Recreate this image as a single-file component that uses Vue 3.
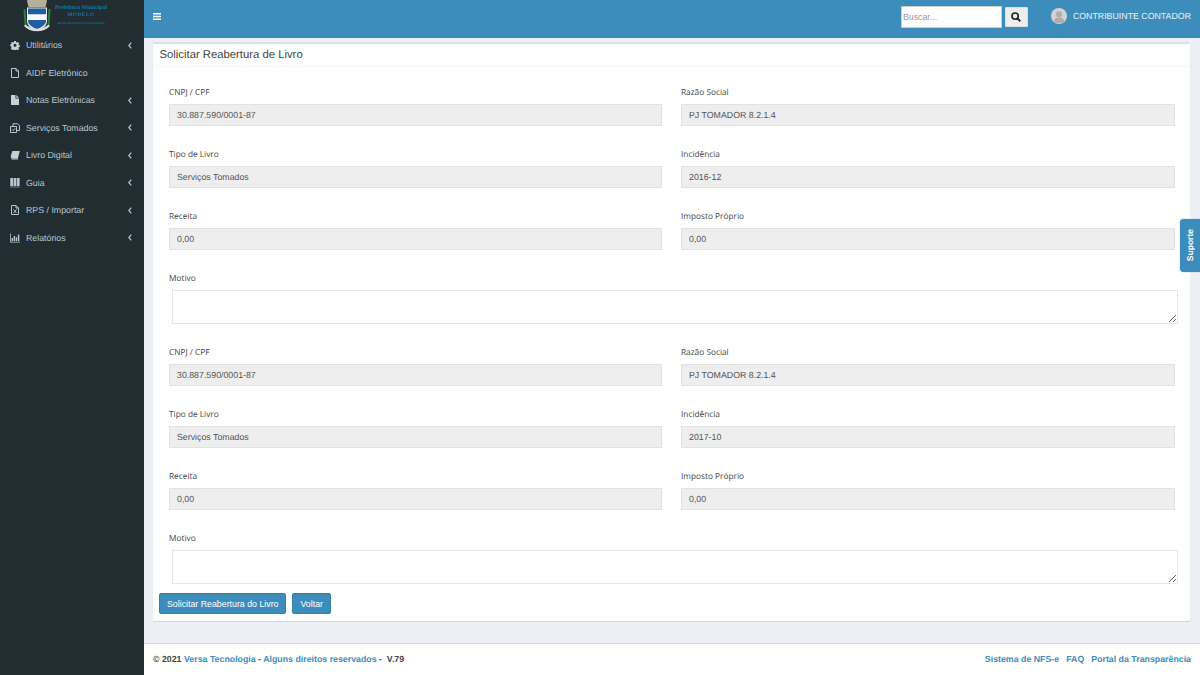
<script setup>
const menu = [
  { label: 'Utilitários', icon: 'gear', arrow: true },
  { label: 'AIDF Eletrônico', icon: 'file-o', arrow: false },
  { label: 'Notas Eletrônicas', icon: 'file', arrow: true },
  { label: 'Serviços Tomados', icon: 'copy', arrow: true },
  { label: 'Livro Digital', icon: 'book', arrow: true },
  { label: 'Guia', icon: 'barcode', arrow: true },
  { label: 'RPS / Importar', icon: 'excel', arrow: true },
  { label: 'Relatórios', icon: 'chart', arrow: true }
]
const blocks = [
  { inc: '2016-12' },
  { inc: '2017-10' }
]
</script>

<template>
  <div class="app">
    <aside class="sidebar">
      <div class="logo">
        <svg class="crest" width="32" height="33" viewBox="0 0 32 33">
          <path d="M6 1 L7.500 -2 L10.500 0 L13 -2 L16 0 L19 -2 L21.500 0 L24.500 -2 L26 1 L24.500 7 L7.500 7 Z" fill="#b5b09a" />
          <path d="M2.500 9 L4.500 9 L5.500 25 L3.500 25 Z" fill="#2f7d3c" />
          <path d="M27.500 9 L29.500 9 L28.500 25 L26.500 25 Z" fill="#2f7d3c" />
          <path d="M6 7.500 H26 V21 C26 27 20 29 16 31 C12 29 6 27 6 21 Z" fill="#e8eef2" />
          <path d="M7 8.500 H25 V14.500 H7 Z" fill="#1f5f9f" />
          <path d="M7 14.500 H25 V20 H7 Z" fill="#f7f8f9" />
          <path d="M7 20 H25 V21 C25 25 19.500 27.500 16 29.500 C12.500 27.500 7 25 7 21 Z" fill="#1f5f9f" />
          <path d="M3 26 C9 33 23 33 29 26 L27.500 24.500 C22 30 10 30 4.500 24.500 Z" fill="#d8dcdc" />
        </svg>
        <div class="logo-text">
          <div class="lt1">Prefeitura Municipal</div>
          <div class="lt2">MODELO</div>
          <div class="lt3">SECRETARIA MUNICIPAL DE FAZENDA</div>
        </div>
      </div>
      <nav class="menu">
        <a v-for="m in menu" :key="m.label" class="item">
          <span class="ico">
            <svg width="10" height="10" viewBox="0 0 10 10">
              <g v-if="m.icon === 'gear'" fill="#c4d1d7">
                <path fill-rule="evenodd" d="M4 .8h2l.3 1.200.9.4 1.100-.6 1.300 1.400-.7 1 .4.900 1.100.3v1.800l-1.100.3-.4.900.7 1-1.300 1.400-1.100-.6-.9.4-.3 1.200H4l-.3-1.200-.9-.4-1.100.6L.4 8.500l.7-1-.4-.9L-.4 6.300V4.500l1.100-.3.4-.9-.7-1L1.700 1.800l1.100.6.9-.4ZM5 3.700a1.700 1.700 0 1 0 0 3.400 1.700 1.700 0 0 0 0-3.400Z" transform="translate(.5 .4) scale(.9)" />
              </g>
              <g v-else-if="m.icon === 'file-o'" fill="none" stroke="#b8c7ce">
                <path d="M1.500.5H6L8.500 3V9.500H1.500Z M6 .5V3H8.500" />
              </g>
              <g v-else-if="m.icon === 'file'" fill="#c4d1d7">
                <path d="M1 0H5.500V3.500H9V10H1Z M6.300 0 L9 2.700H6.300Z" />
              </g>
              <g v-else-if="m.icon === 'copy'" fill="none" stroke="#b8c7ce">
                <path d="M.5 3.500H6.500V9.500H.5Z" />
                <path d="M3 3.500V.8H7.500L9.500 2.600V7.500H6.500" />
                <path d="M2 6.500L3.200 7.700 5.200 5.300" />
              </g>
              <g v-else-if="m.icon === 'book'" fill="#c4d1d7">
                <path d="M2.300 1H9.800L8 8H2C1 8 .6 7 .8 6Z" />
                <path d="M1.200 8.300H8.200L8 9.500H2C1.400 9.500 1.200 9 1.200 8.300Z" />
              </g>
              <g v-else-if="m.icon === 'barcode'" fill="#b8c7ce">
                <path d="M.3 0H3V8.300H.3ZM3.600 0H6.300V8.300H3.600ZM6.900 0H9.600V8.300H6.900Z" />
                <path d="M.3 8.800H9.600V9.500H.3Z" opacity=".55" />
              </g>
              <g v-else-if="m.icon === 'excel'" fill="none" stroke="#b8c7ce">
                <path d="M1.500.5H6L8.500 3V9.500H1.500Z M6 .5V3H8.500" />
                <path d="M3.500 4.500L6.500 8M6.500 4.500L3.500 8" />
              </g>
              <g v-else fill="#b8c7ce">
                <path d="M0 .5H.8V8.700H10V9.500H0Z" />
                <path d="M1.600 5H3V8H1.600ZM3.700 3H5.100V8H3.700ZM5.800 4.200H7.200V8H5.800ZM7.900 1.500H9.300V8H7.900Z" />
              </g>
            </svg>
          </span>
          <span class="label">{{ m.label }}</span>
          <svg v-if="m.arrow" class="chev" width="4" height="7" viewBox="0 0 4 7">
            <path d="M3.300 .7L.8 3.500 3.300 6.300" fill="none" stroke="#b8c7ce" stroke-width="1.200" />
          </svg>
        </a>
      </nav>
    </aside>

    <div class="main">
      <header class="topbar">
        <svg class="burger" width="8" height="7" viewBox="0 0 8 7">
          <path d="M0 0H8V1.400H0ZM0 2.800H8V4.200H0ZM0 5.600H8V7H0Z" fill="#fff" />
        </svg>
        <div class="grow"></div>
        <input class="search" placeholder="Buscar..." />
        <button class="sbtn">
          <svg width="10" height="10" viewBox="0 0 9 9">
            <circle cx="3.700" cy="3.700" r="2.800" fill="none" stroke="#222" stroke-width="1.500" />
            <path d="M5.800 5.800L8.300 8.300" stroke="#222" stroke-width="1.700" />
          </svg>
        </button>
        <div class="avatar">
          <svg width="16" height="16" viewBox="0 0 16 16">
            <circle cx="8" cy="8" r="8" fill="#d2d2d2" />
            <circle cx="8" cy="6.200" r="3" fill="#aeaeae" />
            <path d="M3 14C3 10.500 5 9.500 8 9.500S13 10.500 13 14C11.500 15.500 4.500 15.500 3 14Z" fill="#aeaeae" />
          </svg>
        </div>
        <span class="user">CONTRIBUINTE CONTADOR</span>
      </header>

      <main class="content">
        <section class="box">
          <h3 class="title">Solicitar Reabertura de Livro</h3>
          <div class="body">
            <div v-for="b in blocks" :key="b.inc" class="block">
              <div class="grid">
                <div class="field"><label>CNPJ / CPF</label><div class="ro">30.887.590/0001-87</div></div>
                <div class="field"><label>Razão Social</label><div class="ro">PJ TOMADOR 8.2.1.4</div></div>
                <div class="field"><label>Tipo de Livro</label><div class="ro">Serviços Tomados</div></div>
                <div class="field"><label>Incidência</label><div class="ro">{{ b.inc }}</div></div>
                <div class="field"><label>Receita</label><div class="ro">0,00</div></div>
                <div class="field"><label>Imposto Próprio</label><div class="ro">0,00</div></div>
              </div>
              <div class="motivo">
                <label>Motivo</label>
                <textarea></textarea>
              </div>
            </div>
          </div>
          <div class="actions">
            <button class="btn">Solicitar Reabertura do Livro</button>
            <button class="btn">Voltar</button>
          </div>
        </section>
      </main>

      <footer class="footer">
        <div class="fl">© 2021 <a>Versa Tecnologia</a> - <a>Alguns direitos reservados</a> - &nbsp;V.79</div>
        <div class="fr"><a>Sistema de NFS-e</a><a>FAQ</a><a>Portal da Transparência</a></div>
      </footer>
    </div>

    <div class="suporte"><span>Suporte</span></div>
  </div>
</template>

<style scoped>
.app { display: flex; width: 1200px; height: 675px; overflow: hidden; font-family: "Liberation Sans", Arial, sans-serif; position: relative; background: #ecf0f5; text-rendering: geometricPrecision; }
.sidebar { width: 144px; flex: none; background: #222d32; display: flex; flex-direction: column; }
.logo { height: 31.500px; display: flex; padding-left: 21px; gap: 2px; overflow: hidden; }
.crest { flex: none; }
.logo-text { color: #0f78a8; font-family: "Liberation Serif", serif; font-weight: 700; text-align: center; width: 54px; padding-top: 5px; margin-left: -1px; }
.lt1 { font-size: 5.800px; line-height: 7px; white-space: nowrap; }
.lt2 { font-size: 5.200px; line-height: 7px; letter-spacing: .6px; }
.lt3 { font-size: 2.500px; line-height: 3px; margin-top: 3px; white-space: nowrap; }
.menu { display: flex; flex-direction: column; }
.item { height: 27.500px; display: flex; align-items: center; padding-left: 10px; color: #b8c7ce; font-size: 8.800px; }
.ico { width: 16px; display: flex; flex: none; }
.label { flex: 1; }
.chev { margin-right: 12px; }
.main { flex: 1; display: flex; flex-direction: column; min-width: 0; }
.topbar { height: 38px; flex: none; background: #3c8dbc; display: flex; align-items: center; padding: 0 9px; box-sizing: border-box; padding-bottom: 6px; }
.burger { flex: none; }
.grow { flex: 1; }
.search { width: 101px; height: 22px; box-sizing: border-box; border: 1px solid #ccc; padding: 0 1px; font-size: 8.800px; font-family: inherit; background: #fff; outline: none; margin-top: 2px; }
.search::placeholder { color: #999; }
.sbtn { width: 23px; height: 20px; margin-left: 3px; margin-top: 2px; background: #eee; border: 1px solid #ddd; border-radius: 1px; display: flex; align-items: center; justify-content: center; padding: 0; }
.avatar { margin-left: 23px; width: 16px; height: 16px; }
.user { margin-left: 6px; color: #fff; font-size: 8.800px; opacity: .9; white-space: nowrap; }
.content { flex: 1; padding: 4px 10px 22px 9px; min-height: 0; display: flex; flex-direction: column; }
.box { flex: 1; background: #fff; border-top: 2px solid #dde0e6; border-radius: 2px; box-shadow: 0 1px 1px rgba(0,0,0,.1); display: flex; flex-direction: column; }
.title { margin: 0; height: 23px; line-height: 23px; padding-left: 6.500px; font-size: 11.300px; font-weight: 400; color: #444; border-bottom: 1px solid #f4f4f4; box-sizing: border-box; }
.body { padding: 0 15px 0 16px; display: flex; flex-direction: column; }
.block { display: flex; flex-direction: column; }
.grid { display: grid; grid-template-columns: 493px 494px; column-gap: 19px; }
.field { height: 62px; box-sizing: border-box; padding-top: 19px; }
label { display: block; font-family: "Open Sans", sans-serif; font-size: 8.300px; line-height: 14px; color: #444; height: 17.500px; }
.ro { height: 22px; box-sizing: border-box; background: #eee; border: 1px solid #e2e2e2; padding-left: 7px; font-size: 8.800px; line-height: 20px; color: #555; }
.motivo { height: 74px; box-sizing: border-box; padding-top: 19px; position: relative; }
.motivo label { height: 18px; }
textarea { display: block; margin: 0 0 0 3px; width: 1006px; height: 34px; box-sizing: border-box; border: 1px solid #e4e6ea; background: #fff; outline: none; }
.actions { display: flex; gap: 6px; padding: 0 0 0 6px; margin-top: 6px; }
.btn { height: 21px; background: #3c8dbc; border: 1px solid #367fa9; border-radius: 2px; color: #fff; font-size: 8.800px; font-family: inherit; padding: 0 7px; }
.footer { height: 32px; flex: none; background: #fff; border-top: 1px solid #d2d6de; display: flex; align-items: center; justify-content: space-between; padding: 0 9px 1px; font-size: 8.800px; font-weight: 700; color: #444; box-sizing: border-box; }
.footer a { color: #3c8dbc; }
.fr { display: flex; gap: 7px; }
.suporte { position: absolute; right: 0; top: 219px; width: 20px; height: 53px; background: #3c8dbc; border-radius: 4px 0 0 4px; display: flex; align-items: center; justify-content: center; box-shadow: 0 0 1px #367fa9; }
.suporte span { writing-mode: vertical-rl; transform: rotate(180deg); color: #fff; font-weight: 700; font-size: 8.500px; }
</style>
